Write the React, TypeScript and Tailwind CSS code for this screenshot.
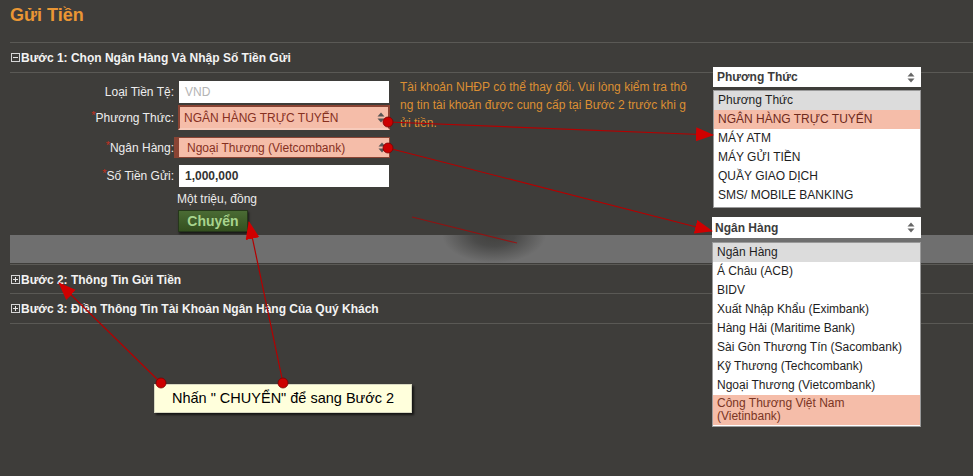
import React from 'react';

const ToggleIcon = ({ open }: { open: boolean }) => (
  <svg width="10" height="10" viewBox="0 0 10 10" className="ml-[1px] shrink-0">
    <rect x="0.5" y="0.5" width="8" height="8" fill="none" stroke="#d6d6d6" />
    <line x1="2" y1="4.5" x2="7" y2="4.5" stroke="#e6e6e6" />
    {!open && <line x1="4.5" y1="2" x2="4.5" y2="7" stroke="#e6e6e6" />}
  </svg>
);

const SortArrows = ({ color = '#555' }: { color?: string }) => (
  <svg width="8" height="11" viewBox="0 0 8 11" className="shrink-0">
    <path d="M4 0.5 L7.5 4.5 L0.5 4.5 Z" fill={color} />
    <path d="M4 10.5 L7.5 6.5 L0.5 6.5 Z" fill={color} />
  </svg>
);

const Req = () => <span className="relative -top-[3px] text-[#c2301f] text-[11px]">*</span>;

const phuongThuc = ['MÁY ATM', 'MÁY GỬI TIỀN', 'QUẦY GIAO DỊCH', 'SMS/ MOBILE BANKING'];
const nganHang = [
  'Á Châu (ACB)',
  'BIDV',
  'Xuất Nhập Khẩu (Eximbank)',
  'Hàng Hải (Maritime Bank)',
  'Sài Gòn Thương Tín (Sacombank)',
  'Kỹ Thương (Techcombank)',
  'Ngoại Thương (Vietcombank)',
];

export default function App() {
  return (
    <div className="relative w-[973px] h-[476px] overflow-hidden bg-[#3e3d3a] font-['Liberation_Sans',Arial,sans-serif]">
      {/* title */}
      <div className="h-[42px] pt-[3px] pl-[10px]">
        <h1 className="text-[18px] leading-[24px] font-bold text-[#ea9634]">Gửi Tiền</h1>
      </div>

      <div className="ml-[10px]">
        {/* step 1 */}
        <div className="flex items-center h-[31px] pt-[1px] border-y border-[#5a5955]">
          <ToggleIcon open />
          <span className="text-[12px] font-bold text-[#f3f3f3]">Bước 1: Chọn Ngân Hàng Và Nhập Số Tiền Gửi</span>
        </div>

        <div className="flex">
          <div className="w-[380px] text-[12px]">
            <div className="flex items-center h-[22px] mt-[8px]">
              <label className="w-[164px] text-right text-[#eeeeee]">Loại Tiền Tệ:</label>
              <div className="ml-[5px] w-[210px] h-[22px] bg-white flex items-center pl-[6px] text-[#b4b4b4]">VND</div>
            </div>

            <div className="flex items-center h-[25px] mt-[2px]">
              <label className="w-[164px] text-right text-[#eeeeee]"><Req />Phương Thức:</label>
              <div className="ml-[4px] w-[212px] h-[25px] bg-[#f5bda9] border-2 border-[#8a4434] border-b-[#f7cbbb] flex items-center justify-between pl-[4px] pr-[3px] text-[#86301f]">
                <span>NGÂN HÀNG TRỰC TUYẾN</span>
                <SortArrows />
              </div>
            </div>

            <div className="flex items-center h-[21px] mt-[7px]">
              <label className="w-[164px] text-right text-[#eeeeee]"><Req />Ngân Hàng:</label>
              <div className="w-[216px] h-[21px] bg-[#f5bda9] border border-l-[5px] border-[#8a4434] flex items-center justify-between pl-[8px] pr-[3px] text-[#86301f]">
                <span>Ngoại Thương (Vietcombank)</span>
                <SortArrows />
              </div>
            </div>

            <div className="flex items-center h-[22px] mt-[7px]">
              <label className="w-[164px] text-right text-[#eeeeee]"><Req />Số Tiền Gửi:</label>
              <div className="ml-[5px] w-[210px] h-[22px] bg-white flex items-center pl-[6px] font-bold text-[#333]">1,000,000</div>
            </div>

            <div className="ml-[167px] mt-[1px] h-[22px] leading-[22px] text-[#ececec]">Một triệu, đồng</div>

            <button className="ml-[168px] w-[70px] h-[22px] bg-gradient-to-b from-[#4a6b34] to-[#34501f] border border-[#25371a] shadow-[1px_2px_2px_rgba(0,0,0,0.6)] text-[14px] font-bold text-[#a8d48e] leading-none">
              Chuyển
            </button>
          </div>

          <div className="ml-[10px] pt-[5px] text-[12px] leading-[18px] text-[#dc8f33]">
            <div>Tài khoản NHĐP có thể thay đổi. Vui lòng kiểm tra thô</div>
            <div>ng tin tài khoản được cung cấp tại Bước 2 trước khi g</div>
            <div>ửi tiền.</div>
          </div>
        </div>

        {/* grey band */}
        <div className="relative mt-[3px] h-[28px] bg-[#6f6f6f]">
          <div className="absolute left-[432px] top-0 w-[104px] h-[28px] bg-[radial-gradient(ellipse_50%_100%_at_50%_0%,#42413e_0%,#4a4a49_40%,transparent_100%)]" />
        </div>

        {/* step 2 & 3 */}
        <div className="mt-[1px] flex items-center h-[30px] pt-[1px] border-y border-[#5a5955]">
          <ToggleIcon open={false} />
          <span className="text-[12px] font-bold text-[#f3f3f3]">Bước 2: Thông Tin Gửi Tiền</span>
        </div>
        <div className="flex items-center h-[30px] pt-[1px] border-b border-[#5a5955]">
          <ToggleIcon open={false} />
          <span className="text-[12px] font-bold text-[#f3f3f3]">Bước 3: Điền Thông Tin Tài Khoản Ngân Hàng Của Quý Khách</span>
        </div>
      </div>

      {/* dropdown: Phương Thức */}
      <div className="absolute left-[713px] top-[67px] w-[208px] text-[12px]">
        <div className="h-[20px] bg-white flex items-center justify-between pl-[4px] pr-[6px] font-bold text-[#3c3c3c]">
          <span>Phương Thức</span>
          <SortArrows color="#666" />
        </div>
        <div className="mt-[3px] bg-white border border-[#9a9a9a] pb-[2px] text-[#1e1e1e]">
          <div className="h-[19px] leading-[19px] pl-[4px] bg-[#dcdcdc]">Phương Thức</div>
          <div className="h-[19px] leading-[19px] pl-[4px] bg-[#f5bda9] text-[#6e2a1c]">NGÂN HÀNG TRỰC TUYẾN</div>
          {phuongThuc.map((t) => (
            <div key={t} className="h-[19px] leading-[19px] pl-[4px]">{t}</div>
          ))}
        </div>
      </div>

      {/* dropdown: Ngân Hàng */}
      <div className="absolute left-[712px] top-[217px] w-[209px] text-[12px]">
        <div className="h-[21px] bg-white flex items-center justify-between pl-[3px] pr-[6px] font-bold text-[#3c3c3c]">
          <span>Ngân Hàng</span>
          <SortArrows color="#666" />
        </div>
        <div className="mt-[4px] bg-white border border-[#9a9a9a] pb-[1px] text-[#1e1e1e]">
          <div className="h-[19px] leading-[19px] pl-[4px] bg-[#dcdcdc]">Ngân Hàng</div>
          {nganHang.map((t) => (
            <div key={t} className="h-[19px] leading-[19px] pl-[4px]">{t}</div>
          ))}
          <div className="h-[30px] pt-[2px] leading-[13px] pl-[4px] bg-[#f5bda9] text-[#7a3524]">
            Công Thương Việt Nam<br />(Vietinbank)
          </div>
        </div>
      </div>

      {/* callout */}
      <div className="absolute left-[154px] top-[384px] w-[258px] h-[29px] bg-[#ffffdc] border border-[#d8d8c0] shadow-[2px_2px_2px_rgba(0,0,0,0.65)] flex items-center pl-[17px] text-[14.5px] text-black">
        Nhấn " CHUYỂN" để sang Bước 2
      </div>

      {/* annotation arrows */}
      <svg className="absolute inset-0 pointer-events-none" width="973" height="476" viewBox="0 0 973 476">
        <defs>
          <marker id="ah" markerUnits="userSpaceOnUse" markerWidth="18" markerHeight="14" refX="17" refY="7" orient="auto">
            <path d="M0 0 L18 7 L0 14 Z" fill="#d00000" />
          </marker>
        </defs>
        <line x1="388" y1="122" x2="713" y2="135" stroke="#b40000" strokeWidth="1.2" markerEnd="url(#ah)" />
        <line x1="388" y1="148" x2="712" y2="231" stroke="#b40000" strokeWidth="1.2" markerEnd="url(#ah)" />
        <line x1="412" y1="217" x2="517" y2="243" stroke="#b00000" strokeOpacity="0.7" strokeWidth="1.2" />
        <line x1="161" y1="383" x2="59" y2="283" stroke="#b40000" strokeWidth="1.2" markerEnd="url(#ah)" />
        <line x1="283" y1="383" x2="249" y2="222" stroke="#b40000" strokeWidth="1.2" markerEnd="url(#ah)" />
        <circle cx="388" cy="122" r="5" fill="#cc0000" stroke="#7a0000" strokeWidth="0.8" />
        <circle cx="388" cy="148" r="5" fill="#cc0000" stroke="#7a0000" strokeWidth="0.8" />
        <circle cx="161" cy="383" r="5" fill="#cc0000" stroke="#7a0000" strokeWidth="0.8" />
        <circle cx="283" cy="383" r="5" fill="#cc0000" stroke="#7a0000" strokeWidth="0.8" />
      </svg>
    </div>
  );
}
